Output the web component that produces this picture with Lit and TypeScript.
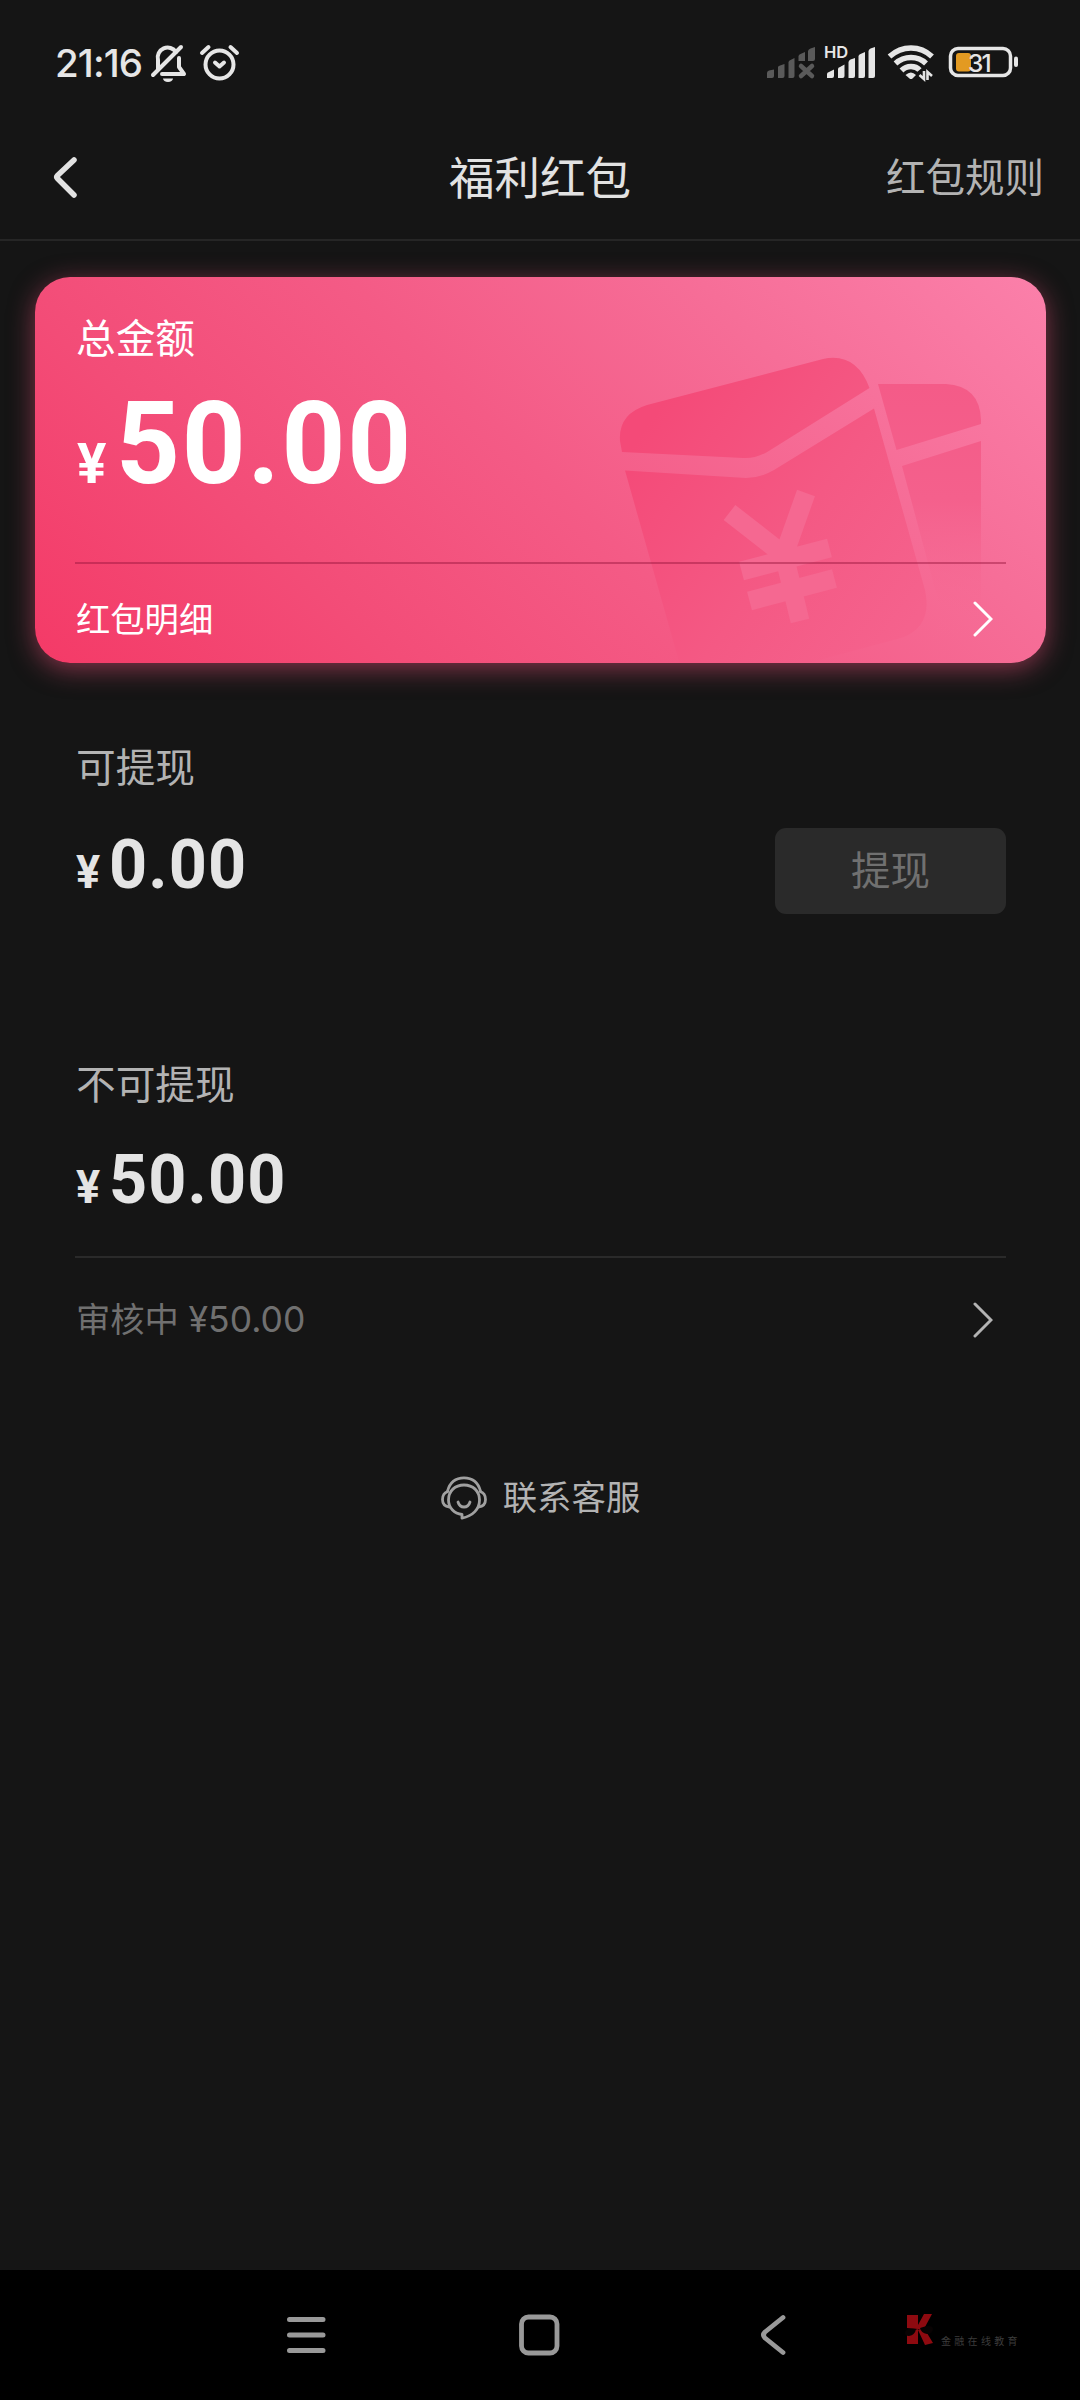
import { LitElement, html, svg, css } from "lit";
import { customElement, property } from "lit/decorators.js";

@customElement("status-bar")
class StatusBar extends LitElement {
  static styles = css`
    :host { display: flex; height: 115px; padding: 10px 62px 0 55px; box-sizing: border-box; align-items: center; color: #e6e6e6; }
    .time { font: 500 38.5px/50px Inter, "Noto Sans CJK SC", sans-serif; letter-spacing: -0.9px; width: 95px; white-space: nowrap; }
    svg { display: block; }
    .spacer { flex: 1; }
  `;
  render() {
    return html`
      <div class="time">21:16</div>
      <svg width="90" height="40" viewBox="150 43 90 40" fill="none" stroke="#e6e6e6" stroke-width="4" stroke-linecap="round" stroke-linejoin="round">
        <path d="M158 69V60A10 10 0 0 1 176 52"/>
        <path d="M179 58V67L184 74H162"/>
        <path d="M153 75L181 47"/>
        <path d="M163 78.500H173A5 3.500 0 0 1 163 78.500Z" fill="#e6e6e6" stroke="none"/>
        <circle cx="219.500" cy="64.500" r="14"/>
        <path d="M215 62.500L219.500 66.500L224 62.500"/>
        <path d="M202 53L208.500 47M230.500 47L237 53"/>
      </svg>
      <span class="spacer"></span>
      <svg width="252" height="44" viewBox="766 42 252 44">
        <g fill="#5a5a5a">
          <path d="M767 79V74Q767 72 769 71.500L774 70.500V77Q774 79 772 79Z"/>
          <path d="M778 79V68Q778 67 780 66.500L784.500 65V77Q784.500 79 782.500 79H778Z"/>
          <path d="M788.500 79V63Q789 61.500 790.500 61L794.500 59V77Q794.500 79 792.500 79Z"/>
          <path d="M798.500 62V57Q799 55.500 800.500 55L805 53V62Z"/>
          <path d="M808 62V52Q808.500 50 810.500 49.500L815 48V60Q815 62 813 62Z"/>
        </g>
        <path d="M801 67L812 77M812 67L801 77" stroke="#5a5a5a" stroke-width="4.500" stroke-linecap="round"/>
        <text x="824" y="59" font-family="Inter, sans-serif" font-size="16.500" font-weight="600" fill="#e6e6e6">HD</text>
        <g fill="#e6e6e6">
          <path d="M827 79V75Q827 73.500 829 73L834 70.500V77Q834 79 832 79Z"/>
          <path d="M838 79V70Q838 68.500 840 68L844.500 65.500V77Q844.500 79 842.500 79Z"/>
          <path d="M848.500 79V63Q849 61 850.500 60.500L855 59V77Q855 79 853 79Z"/>
          <path d="M858.500 79V57Q859 55.500 860.500 55L865 53V77Q865 79 863 79Z"/>
          <path d="M868.500 79V52Q869 50 870.500 49.500L875 48V77Q875 79 873 79Z"/>
        </g>
        <g fill="none" stroke="#e6e6e6" stroke-width="5.500">
          <path d="M889.500 57.500Q899 49 911 49T932 57.500"/>
          <path d="M895.500 64.500Q902 58.500 911 58.500T926 64.500"/>
          <path d="M901.500 71.500Q905.500 67.500 911 67.500T919.500 71"/>
        </g>
        <path d="M905.500 76Q911 71 916 76L912.500 79.500Q911 80.500 909.500 79.500Z" fill="#e6e6e6"/>
        <path d="M924 72V80L919.500 76M927.500 81V73L932 77" fill="none" stroke="#e6e6e6" stroke-width="2.600"/>
        <rect x="950.500" y="49.500" width="60" height="27" rx="7.500" fill="none" stroke="#e6e6e6" stroke-width="3.500"/>
        <rect x="1014" y="57.500" width="4" height="10.500" rx="2" fill="#e6e6e6"/>
        <rect x="956" y="54" width="15" height="18.500" rx="3" fill="#e39a22"/>
        <text x="968" y="72.500" font-family="Inter, sans-serif" font-size="24.500" font-weight="500" letter-spacing="-1.800" fill="#e6e6e6">31</text>
      </svg>`;
  }
}

@customElement("money-amount")
class MoneyAmount extends LitElement {
  @property() value = "";
  static styles = css`
    :host { display: flex; align-items: baseline; font-family: Roboto, sans-serif; font-weight: 700; line-height: 1; white-space: nowrap; }
    .yen { font-size: var(--yen, 46px); width: var(--yen-box, 33px); }
    .yen span { display: inline-block; transform: scaleX(0.98); transform-origin: 0 50%; }
    .num { display: inline-block; font-size: var(--num, 69px); letter-spacing: 0.016em; transform: scaleX(0.965); transform-origin: 0 50%; }
  `;
  render() {
    return html`<span class="yen"><span>¥</span></span><span class="num">${this.value}</span>`;
  }
}

@customElement("app-root")
class AppRoot extends LitElement {
  static styles = css`
    :host { display: flex; flex-direction: column; width: 1080px; height: 2400px; background: #151515; font-family: "Noto Sans CJK SC", sans-serif; color: #b3b3b3; overflow: hidden; }
    svg { display: block; flex-shrink: 0; }
    .header { display: grid; grid-template-columns: 1fr auto 1fr; align-items: center; height: 126px; box-sizing: border-box; padding: 0 36px 5px 52px; border-bottom: 2px solid #262626; }
    .header svg { margin-top: 5px; }
    .title { font-size: 45.500px; line-height: 60px; color: #e2e2e2; margin-right: 16px; }
    .rules { font-size: 39.500px; line-height: 56px; justify-self: end; margin-left: -16px; }
    main { flex: 1; padding: 36px 34px 0 35px; }
    .card { position: relative; height: 386px; border-radius: 35px; background: linear-gradient(45deg, #f43a67 0%, #f34c77 25%, #f45b86 50%, #f66e98 75%, #fb80aa 100%); box-shadow: 0 6px 26px rgba(244, 82, 126, 0.5); color: #fff; box-sizing: border-box; padding: 29px 40px 0; }
    .art { position: absolute; inset: 0; }
    .body { position: relative; }
    .label { font-size: 39.700px; line-height: 60px; padding-left: 1px; white-space: nowrap; }
    .card money-amount { --num: 115.500px; --yen: 56px; --yen-box: 39px; padding: 20px 0 0 2px; height: 196px; box-sizing: border-box; }
    .row { display: flex; align-items: center; justify-content: space-between; height: 108px; font-size: 34.300px; padding: 0 13px 0 1px; border-top: 2px solid rgba(150, 20, 60, 0.45); box-sizing: border-box; }
    .row svg { margin-top: 3px; }
    .section { padding: 0 40px; }
    .first { margin-top: 72px; height: 317px; display: flex; justify-content: space-between; }
    .section money-amount { color: #e4e4e4; padding: 35px 0 0 1px; }
    .second money-amount { padding-top: 33px; }
    .btn { width: 231px; height: 86px; margin-top: 93px; border-radius: 11px; background: #2a2a2a; color: #707070; font-size: 39.500px; line-height: 80px; text-align: center; }
    .review { height: 120px; margin-top: 42px; border-color: #2a2a2a; color: #707070; }
    .review svg { margin-top: 5px; }
    .review .digits { font: 400 35.500px/40px Inter, sans-serif; margin-left: 2px; }
    .service { display: flex; justify-content: center; align-items: center; gap: 16px; height: 60px; margin-top: 89px; font-size: 34.400px; }
    .service svg { margin-top: 6px; }
    .nav { height: 130px; background: #000; display: flex; align-items: flex-start; padding: 43px 0 0 285px; box-sizing: border-box; }
    .nav .home { margin-left: 190px; }
    .nav .back { margin-left: 198px; }
    .mark { display: flex; margin-left: 115px; }
    .mark span { font-size: 10px; letter-spacing: 3.300px; line-height: 14px; color: #3c3c3c; margin: 21px 0 0 5px; white-space: nowrap; }
  `;

  private chevron(color: string) {
    return html`<svg width="20" height="36" viewBox="0 0 20 36" fill="none" stroke=${color} stroke-width="3" stroke-linecap="round"><path d="M2 2L18 18L2 34"/></svg>`;
  }

  private art() {
    return svg`
      <defs>
        <linearGradient id="front" gradientUnits="userSpaceOnUse" x1="630" y1="450" x2="900" y2="640">
          <stop offset="0" stop-color="#f44a78"/><stop offset="0.550" stop-color="#f45984"/><stop offset="1" stop-color="#f5628d"/>
        </linearGradient>
        <linearGradient id="rear" gradientUnits="userSpaceOnUse" x1="0" y1="384" x2="0" y2="640">
          <stop offset="0" stop-color="#f45b88"/><stop offset="0.450" stop-color="#f4608c"/><stop offset="1" stop-color="#f66c95" stop-opacity="0"/>
        </linearGradient>
      </defs>
      <g fill="url(#front)">
        <path d="M622 452L620 441Q618 414 647 405L823 359Q856 352 869.500 388L768 451.500Q755 459 743 458Z"/>
        <path d="M625 470.500L746 478Q760 478 774 470L874 408.500L925 590Q933 627 901 638L808 663H679.500Z"/>
      </g>
      <path d="M729.500 512.500L784 555M806 493L784 555L800 621M741.500 571L829.500 548M749.500 601L834.500 578.500" stroke="#f56891" stroke-width="19" fill="none"/>
      <g fill="url(#rear)">
        <path d="M878 384H946Q980 386 981 420V424L896.500 450Z"/>
        <path d="M902 466L981 441V663H880L915 650Q945 635 938 600Z"/>
      </g>`;
  }

  render() {
    return html`
      <status-bar></status-bar>
      <div class="header">
        <svg width="26" height="44" viewBox="0 0 26 44" fill="none" stroke="#e2e2e2" stroke-width="5.500" stroke-linecap="round" stroke-linejoin="round"><path d="M22 5L5.500 20.500Q4 22 5.500 23.500L22 40"/></svg>
        <div class="title">福利红包</div>
        <div class="rules">红包规则</div>
      </div>
      <main>
        <div class="card">
          <svg class="art" width="1011" height="386" viewBox="35 277 1011 386">${this.art()}</svg>
          <div class="body">
            <div class="label">总金额</div>
            <money-amount value="50.00"></money-amount>
            <div class="row"><span>红包明细</span>${this.chevron("#fff")}</div>
          </div>
        </div>
        <div class="section first">
          <div class="side">
            <div class="label">可提现</div>
            <money-amount value="0.00"></money-amount>
          </div>
          <div class="btn">提现</div>
        </div>
        <div class="section second">
          <div class="label">不可提现</div>
          <money-amount value="50.00"></money-amount>
          <div class="row review"><span>审核中 <span class="digits">¥50.00</span></span>${this.chevron("#b3b3b3")}</div>
        </div>
        <div class="service">
          <svg width="46" height="44" viewBox="0 0 46 44" fill="none" stroke="#a0a0a0" stroke-width="2.800" stroke-linecap="round" stroke-linejoin="round">
            <path d="M6.500 15C9 6 15 1.800 23 1.800S37 6 39.500 15"/>
            <path d="M21 40.500V38.500C13 37.500 7.500 31.500 7.500 24C7.500 15 14 9 23 9S38.500 15 38.500 24C38.500 33 32 40 21 42.200Z"/>
            <path d="M7 15.500C3.500 16.500 1.500 19.500 1.500 23.500S4 30.500 8.500 31M39 15.500C42.500 16.500 44.500 19.500 44.500 23.500S42 30.500 37.500 31"/>
            <path d="M17 26Q18.500 31 23 31T29 26"/>
          </svg>
          <span>联系客服</span>
        </div>
      </main>
      <div class="nav">
        <svg width="42" height="44" viewBox="285 2313 42 44" stroke="#999" stroke-width="5" stroke-linecap="round"><path d="M289.500 2319.500H323M289.500 2335H323M289.500 2350.500H323"/></svg>
        <svg class="home" width="44" height="44" viewBox="517 2313 44 44" fill="none" stroke="#999" stroke-width="4.800"><rect x="521.500" y="2317" width="35.500" height="36" rx="7"/></svg>
        <svg class="back" width="30" height="44" viewBox="759 2313 30 44" fill="none" stroke="#999" stroke-width="4.800" stroke-linecap="round" stroke-linejoin="round"><path d="M783 2317.500L765 2332Q762 2335 765 2338L783 2352.500"/></svg>
        <div class="mark">
          <svg width="32" height="34" viewBox="903 2313 32 34">
            <path d="M906 2315H917V2325L923 2314H931L924 2327Q920 2330 917 2329L906 2328ZM906 2332L917 2329V2344H906ZM917 2330L923 2328L932 2343L924 2345Z" fill="#8e0a10"/>
            <path d="M904 2333Q904 2328 915 2329Q914 2335 908 2336Q904 2336 904 2333ZM919 2328Q930 2324 932 2328Q932 2334 926 2334Q920 2333 919 2328Z" fill="#080303"/>
          </svg>
          <span>金融在线教育</span>
        </div>
      </div>`;
  }
}
